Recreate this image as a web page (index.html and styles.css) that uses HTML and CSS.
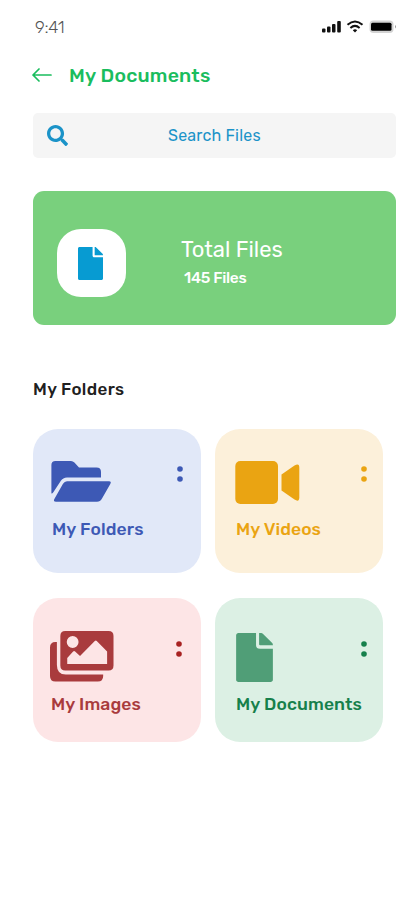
FILE: index.html
```html
<!DOCTYPE html>
<html lang="en">
<head>
<meta charset="utf-8">
<title>My Documents</title>
<link rel="stylesheet" href="styles.css">
</head>
<body>
<main class="screen">
  <div class="status">
    <span class="time">9:41</span>
    <svg class="status-icons" width="76" height="16" viewBox="0 0 76 16">
      <g fill="#111"><rect x="1" y="9.500" width="3.500" height="4" rx="1"/><rect x="6" y="7.500" width="3.500" height="6" rx="1"/><rect x="11" y="5" width="3.500" height="8.500" rx="1"/><rect x="16.200" y="2" width="3.600" height="11.500" rx="1"/></g>
      <g fill="none" stroke="#111" stroke-width="2"><path d="M26.500 5.700q7.500-6.500 15 0"/><path d="M29.400 8.900q4.600-4 9.200 0"/></g>
      <path fill="#111" d="M31.800 11.200q2.200-1.700 4.400 0L34 13.400z"/>
      <rect x="48.500" y="1.500" width="24" height="12.500" rx="4" fill="#d3d3d3"/><rect x="50" y="3.800" width="20.500" height="8" rx="1.500" fill="#000"/><path d="M74 6q2 1.700 0 3.400z" fill="#999"/>
    </svg>
  </div>
  <header class="header">
    <svg width="20" height="14" viewBox="0 0 20 14" fill="none" stroke="#1abd5e" stroke-width="1.700" stroke-linecap="round" stroke-linejoin="round"><path d="M19 7H1M7 1L1 7l6 6"/></svg>
    <h1 class="title">My Documents</h1>
  </header>
  <div class="search">
    <svg class="search-icon" width="21" height="21" viewBox="0 0 512 512" fill="#1b93c8"><path d="M505 442.700L405.300 343c-4.500-4.500-10.600-7-17-7H372c27.600-35.300 44-79.700 44-128C416 93.100 322.900 0 208 0S0 93.100 0 208s93.100 208 208 208c48.300 0 92.700-16.400 128-44v16.300c0 6.400 2.500 12.500 7 17l99.700 99.700c9.400 9.400 24.600 9.400 33.900 0l28.300-28.300c9.400-9.400 9.400-24.600.1-34zM208 336c-70.700 0-128-57.200-128-128 0-70.700 57.200-128 128-128 70.700 0 128 57.200 128 128 0 70.700-57.200 128-128 128z"/></svg>
    <span class="search-text">Search Files</span>
  </div>
  <section class="total">
    <div class="tile">
      <svg width="25" height="33" viewBox="0 0 384 512" preserveAspectRatio="none"><path fill="#079bd2" d="M224 136V0H24C10.700 0 0 10.700 0 24v464c0 13.300 10.700 24 24 24h336c13.300 0 24-10.700 24-24V160H248c-13.200 0-24-10.800-24-24zm160-14.100v6.100H256V0h6.100c6.400 0 12.500 2.500 17 7l97.900 98c4.500 4.500 7 10.600 7 16.900z"/></svg>
    </div>
    <div class="total-info">
      <div class="total-name">Total Files</div>
      <div class="total-count">145 Files</div>
    </div>
  </section>
  <h2 class="section-title">My Folders</h2>
  <section class="grid">
    <article class="card folders">
      <div class="card-top">
        <svg width="61" height="41" viewBox="0 0 61 41" fill="#3d59b5"><path d="M4.500 0H20Q22 0 23.400 1.500L28 6.600H45.500Q50 6.600 50 11V16.500H16Q12 16.500 9.700 20L2.500 31Q1.500 32.500.4 32.500V4Q.4 0 4.500 0z"/><path d="M16 20.200H58Q60.800 20.200 59.300 23L51 37.500Q49.200 40.700 46 40.700H5Q1.800 40.700 3.500 37.800L12 22.800Q13.500 20.200 16 20.200z"/></svg>
        <svg class="dots" width="6" height="16" viewBox="0 0 6 16"><circle cx="3" cy="3" r="2.800"/><circle cx="3" cy="13" r="2.800"/></svg>
      </div>
      <div class="label">My Folders</div>
    </article>
    <article class="card videos">
      <div class="card-top">
        <svg width="65" height="43" viewBox="0 0 65 43" fill="#eaa412"><rect x=".3" width="42.700" height="43" rx="5"/><path d="M46.500 13.500 59.500 4.500Q64.300 1.500 64.300 6.500V36.500Q64.300 41.500 59.500 38.500L46.500 29.500z"/></svg>
        <svg class="dots" width="6" height="16" viewBox="0 0 6 16"><circle cx="3" cy="3" r="2.800"/><circle cx="3" cy="13" r="2.800"/></svg>
      </div>
      <div class="label">My Videos</div>
    </article>
    <article class="card images">
      <div class="card-top">
        <svg width="64" height="51" viewBox="0 0 65 51" preserveAspectRatio="none" fill="#a93b3d"><path fill-rule="evenodd" d="M15.500 0H59.500Q64.500 0 64.500 5V34.500Q64.500 39.500 59.500 39.500H15.500Q10.500 39.500 10.500 34.500V5Q10.500 0 15.500 0zM23 5a6 6 0 1 0 0 12 6 6 0 0 0 0-12zM17.500 33H58V20.500L47.500 10Q46.500 9 45.500 10L30.500 25 25.500 20.500Q24.500 19.500 23.500 20.500L17.500 27z"/><path d="M7 11V34Q7 43.500 16 43.500H54V45Q54 50.500 48.500 50.500H5.500Q0 50.500 0 45V16.500Q0 11 5.500 11z"/></svg>
        <svg class="dots" width="6" height="16" viewBox="0 0 6 16"><circle cx="3" cy="3" r="2.800"/><circle cx="3" cy="13" r="2.800"/></svg>
      </div>
      <div class="label">My Images</div>
    </article>
    <article class="card docs">
      <div class="card-top">
        <svg class="doc-icon" width="37" height="49" viewBox="0 0 384 512" fill="#509e77"><path d="M208 128V0H24C10.700 0 0 10.700 0 24v464c0 13.300 10.700 24 24 24h336c13.300 0 24-10.700 24-24V165H248c-24 0-40-13-40-37zm176-6v6H250c-6 0-10-4-10-10V0h22c6.400 0 12.500 2.500 17 7l98 98c4.500 4.500 7 10.600 7 17z"/></svg>
        <svg class="dots" width="6" height="16" viewBox="0 0 6 16"><circle cx="3" cy="3" r="2.800"/><circle cx="3" cy="13" r="2.800"/></svg>
      </div>
      <div class="label">My Documents</div>
    </article>
  </section>
</main>
</body>
</html>
```
FILE: styles.css
```css
* { box-sizing: border-box; }
body {
  margin: 0;
  background: #fff;
  font-family: Rubik, Roboto, "Liberation Sans", sans-serif;
}
svg { display: block; flex: none; }
.screen {
  width: 415px;
  height: 900px;
  padding: 17px 19px 0 33px;
  overflow: hidden;
}
.status {
  display: flex;
  justify-content: space-between;
  align-items: center;
  height: 20px;
  padding-left: 2px;
}
.time { font-size: 17px; font-weight: 300; color: #555; letter-spacing: -0.3px; }
.status-icons { margin-right: -1px; }
.header {
  display: flex;
  align-items: center;
  gap: 17px;
  height: 24px;
  margin: 26px 0 0 -1px;
}
.title { margin: 0; font-size: 19.500px; font-weight: 500; color: #1abd5e; letter-spacing: 0.200px; }
.search {
  display: flex;
  align-items: center;
  height: 45px;
  margin-top: 26px;
  padding-left: 14px;
  border-radius: 5px;
  background: #f5f5f5;
}
.search-text { margin-left: 100px; font-size: 16px; color: #1b93c8; letter-spacing: 0.200px; }
.total {
  display: flex;
  align-items: center;
  height: 134px;
  margin-top: 33px;
  padding: 10px 24px 0;
  border-radius: 11px;
  background: #79d07d;
  color: #fff;
}
.tile {
  display: flex;
  align-items: center;
  justify-content: center;
  width: 69px;
  height: 68px;
  padding-right: 2px;
  border-radius: 24px;
  background: #fff;
}
.total-info { margin-left: 55px; }
.total-name { font-size: 22px; line-height: 28px; font-weight: 400; }
.total-count { margin-left: 3px; margin-top: 2px; font-size: 15.500px; line-height: 24px; font-weight: 500; letter-spacing: -0.3px; }
.section-title {
  margin: 53px 0 0;
  font-size: 17px;
  line-height: 22px;
  font-weight: 500;
  letter-spacing: 0.350px;
  color: #202020;
}
.grid {
  display: grid;
  grid-template-columns: 168px 168px;
  grid-auto-rows: 144px;
  gap: 25px 14px;
  margin-top: 29px;
}
.card { padding: 32px 17px 0 19px; border-radius: 25px; }
.card-top { display: flex; justify-content: space-between; height: 44px; }
.dots { margin-top: 5px; fill: currentColor; }
.label {
  margin-top: 12px;
  font-size: 17.500px;
  line-height: 24px;
  font-weight: 500;
  letter-spacing: 0.100px;
  white-space: nowrap;
}
.folders { padding-left: 18px; padding-right: 18px; background: #e1e8f8; color: #3d59b5; }
.folders .label, .videos .label, .images .label { margin-left: 1px; }
.videos { padding-left: 20px; padding-right: 16px; background: #fcf0da; color: #eaa412; }
.images, .docs { padding-top: 33px; }
.images .card-top, .docs .card-top { height: 51px; }
.images .dots, .docs .dots { margin-top: 10px; }
.images .label, .docs .label { margin-top: 10px; }
.images { padding-left: 17px; padding-right: 19px; background: #fde5e6; color: #a93b3d; }
.images .dots { fill: #a82222; }
.docs { padding-left: 21px; padding-right: 16px; background: #dcf0e4; color: #16804b; }
.doc-icon { align-self: flex-end; }
```
